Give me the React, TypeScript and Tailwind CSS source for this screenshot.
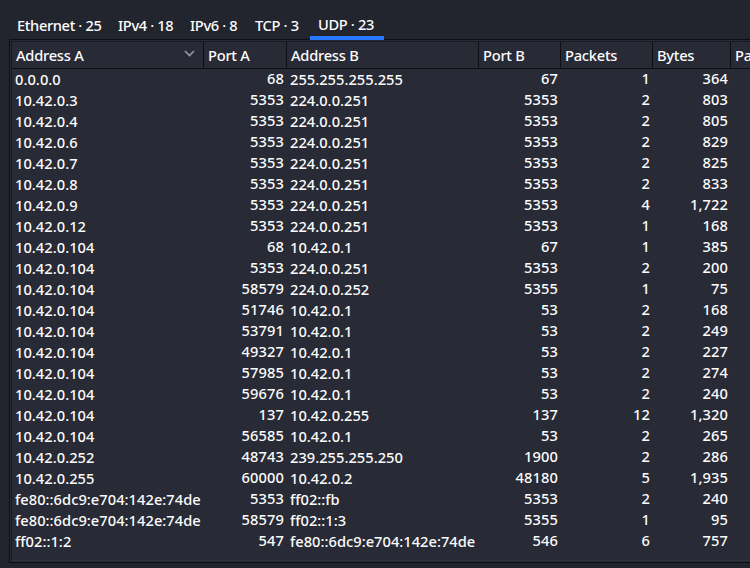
const rows = `0.0.0.0|68|255.255.255.255|67|1|364
10.42.0.3|5353|224.0.0.251|5353|2|803
10.42.0.4|5353|224.0.0.251|5353|2|805
10.42.0.6|5353|224.0.0.251|5353|2|829
10.42.0.7|5353|224.0.0.251|5353|2|825
10.42.0.8|5353|224.0.0.251|5353|2|833
10.42.0.9|5353|224.0.0.251|5353|4|1,722
10.42.0.12|5353|224.0.0.251|5353|1|168
10.42.0.104|68|10.42.0.1|67|1|385
10.42.0.104|5353|224.0.0.251|5353|2|200
10.42.0.104|58579|224.0.0.252|5355|1|75
10.42.0.104|51746|10.42.0.1|53|2|168
10.42.0.104|53791|10.42.0.1|53|2|249
10.42.0.104|49327|10.42.0.1|53|2|227
10.42.0.104|57985|10.42.0.1|53|2|274
10.42.0.104|59676|10.42.0.1|53|2|240
10.42.0.104|137|10.42.0.255|137|12|1,320
10.42.0.104|56585|10.42.0.1|53|2|265
10.42.0.252|48743|239.255.255.250|1900|2|286
10.42.0.255|60000|10.42.0.2|48180|5|1,935
fe80::6dc9:e704:142e:74de|5353|ff02::fb|5353|2|240
fe80::6dc9:e704:142e:74de|58579|ff02::1:3|5355|1|95
ff02::1:2|547|fe80::6dc9:e704:142e:74de|546|6|757`.split("\n").map((r) => r.split("|"));

const cols = "grid grid-cols-[192px_83px_192px_82px_92px_78px_100px]";
const heads = ["Address A", "Port A", "Address B", "Port B", "Packets", "Bytes", "Pa"];
const tabs = [
  { label: "Ethernet · 25", box: "h-[28px] w-[101px] leading-[28px]" },
  { label: "IPv4 · 18", box: "h-[28px] w-[72px] leading-[28px]" },
  { label: "IPv6 · 8", box: "h-[28px] w-[65px] leading-[28px]" },
  { label: "TCP · 3", box: "h-[28px] w-[63px] leading-[28px]" },
  { label: "UDP · 23", box: "z-10 -mb-px h-[29px] w-[74px] border-b-4 border-[#2777ff] leading-[27px]" },
];

export default function App() {
  return (
    <div className="h-[568px] w-[750px] overflow-hidden bg-[#23252e] pl-[9px] font-['Noto_Sans',sans-serif] text-[14.67px] font-medium text-[#fcfcfc]">
      <div className="flex h-[39px] items-end">
        {tabs.map((t) => (
          <div key={t.label} className={`${t.box} pl-2 tracking-[-0.36px] whitespace-nowrap`}>{t.label}</div>
        ))}
      </div>
      <div className="h-[524px] w-[800px] border border-[#0e0f13] bg-[#282a35] p-px">
        <div className="h-[520px] border-t border-l border-[#17181f] border-b border-b-[#2f3140]">
          <div className={`${cols} h-[27px] border-b border-[#0e0f13]`}>
            {heads.map((h, i) => (
              <div key={h} className="flex items-center justify-between border-r border-[#0e0f13] pr-2 pl-1 tracking-[-0.25px] whitespace-nowrap">
                {h}
                {i === 0 && <svg className="-mt-1" width="11" height="7" viewBox="0 0 11 7" fill="none" stroke="#9899a0" strokeWidth="1.6"><path d="M1 1l4.5 4.5L10 1" /></svg>}
              </div>
            ))}
          </div>
          {rows.map((r, n) => (
            <div key={n} className={`${cols} h-[21px]`}>
              {r.map((c, i) => (
                <div key={i} className={i === 0 ? "pl-[3px] leading-[21px] tracking-[0.04px] whitespace-nowrap" : i === 2 ? "pl-[3px] leading-[21px] tracking-[0.02px] whitespace-nowrap" : "pr-[3px] text-right leading-[19px] tracking-[0.1px] whitespace-nowrap"}>{c}</div>
              ))}
            </div>
          ))}
        </div>
      </div>
    </div>
  );
}
